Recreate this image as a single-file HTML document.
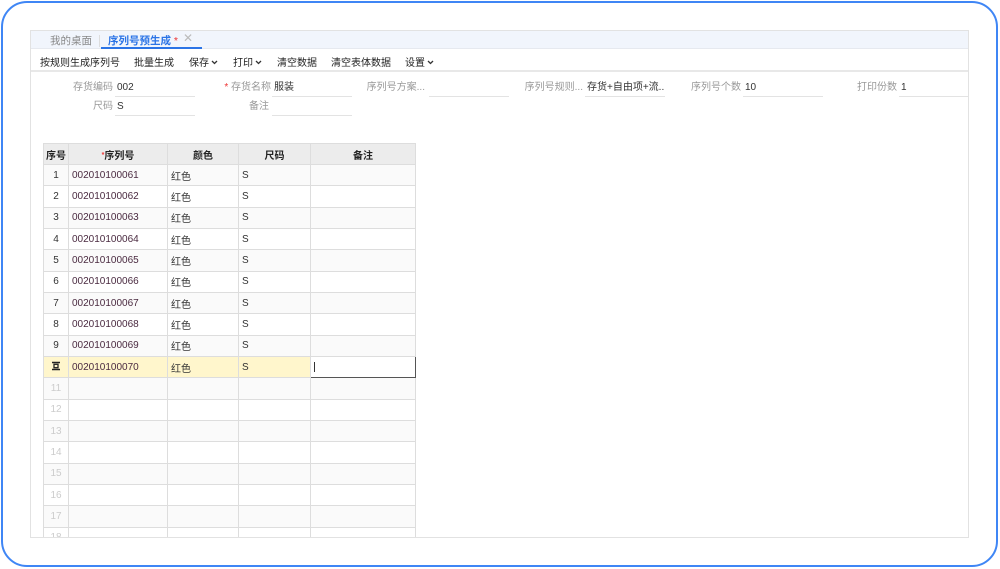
<!DOCTYPE html>
<html><head><meta charset="utf-8"><style>
*{margin:0;padding:0;box-sizing:border-box}
body{width:1000px;height:569px;background:#fff;position:relative;overflow:hidden;font-family:"Liberation Sans","Noto Sans CJK SC",sans-serif;font-size:11px;color:#333}
.outer{position:absolute;left:1px;top:1px;width:997px;height:566px;border:2px solid #3f86f5;border-radius:26px}
.panel{position:absolute;left:30px;top:30px;width:939px;height:508px;border:1px solid #e2e2e2;background:#fff;overflow:hidden}
.tabs{position:absolute;left:0;top:0;width:100%;height:18px;background:#f1f5fc;border-bottom:1px solid #e6e9ef}
.t{position:absolute;top:2px;font-size:10.5px}
.tool{position:absolute;left:0;top:19px;width:100%;height:22px;border-bottom:2px solid #e8e8e8}
.b{position:absolute;top:4px;font-size:10px;color:#222}
.a{position:absolute;font-size:10px;color:#999;text-align:right;line-height:14px;white-space:nowrap}
.v{position:absolute;font-size:10px;color:#333;border-bottom:1px solid #e3e3e3;height:16px;line-height:14px;padding-left:2px;white-space:nowrap;overflow:hidden}
.c{display:inline-block;width:7px;height:5px;margin-left:2px;vertical-align:1px}
table{position:absolute;left:12px;top:112px;border-collapse:collapse;font-size:10px}
td,th{border:1px solid #ddd;height:21.33px;padding:0 3px;text-align:left;font-weight:normal;white-space:nowrap}
th{background:#ececec;font-weight:bold;text-align:center;color:#222;height:21px}
td.n{text-align:center;color:#333;background:#fff}
tr.e td.n{color:#ccc}
tr:nth-child(even) td{background:#fafafa}
tr.sel td{background:#fff6cc}
td.sn{color:#4a2a40}
</style></head><body>
<div class="outer"></div>
<div class="panel">
 <div class="tabs">
  <span class="t" style="left:19px;color:#888">我的桌面</span>
  <div style="position:absolute;left:68px;top:4px;width:1px;height:12px;background:#ddd"></div>
  <span class="t" style="left:77px;color:#2b74e6;font-weight:bold">序列号预生成 <span style="color:#e33;font-weight:normal">*</span></span>
  <span class="t" style="left:152px;color:#bbb;font-size:12px;top:0">✕</span>
  <div style="position:absolute;left:70px;top:16px;width:101px;height:2px;background:#2b74e6"></div>
 </div>
 <div class="tool">
  <span class="b" style="left:9px">按规则生成序列号</span>
  <span class="b" style="left:103px">批量生成</span>
  <span class="b" style="left:158px">保存<svg class="c" viewBox="0 0 7 5"><path d="M1 1l2.5 2.5L6 1" stroke="#333" stroke-width="1.3" fill="none"/></svg></span>
  <span class="b" style="left:202px">打印<svg class="c" viewBox="0 0 7 5"><path d="M1 1l2.5 2.5L6 1" stroke="#333" stroke-width="1.3" fill="none"/></svg></span>
  <span class="b" style="left:246px">清空数据</span>
  <span class="b" style="left:300px">清空表体数据</span>
  <span class="b" style="left:374px">设置<svg class="c" viewBox="0 0 7 5"><path d="M1 1l2.5 2.5L6 1" stroke="#333" stroke-width="1.3" fill="none"/></svg></span>
 </div>
 <span class="a" style="left:30px;width:52px;top:50px">存货编码</span><div class="v" style="left:84px;top:50px;width:80px">002</div>
 <span class="a" style="left:180px;width:60px;top:50px"><span style="color:#e33">*</span> 存货名称</span><div class="v" style="left:241px;top:50px;width:80px">服装</div>
 <span class="a" style="left:330px;width:64px;top:50px">序列号方案...</span><div class="v" style="left:398px;top:50px;width:80px"></div>
 <span class="a" style="left:490px;width:62px;top:50px">序列号规则...</span><div class="v" style="left:554px;top:50px;width:80px">存货+自由项+流...</div>
 <span class="a" style="left:650px;width:60px;top:50px">序列号个数</span><div class="v" style="left:712px;top:50px;width:80px">10</div>
 <span class="a" style="left:820px;width:46px;top:50px">打印份数</span><div class="v" style="left:868px;top:50px;width:80px">1</div>
 <span class="a" style="left:30px;width:52px;top:69px">尺码</span><div class="v" style="left:84px;top:69px;width:80px">S</div>
 <span class="a" style="left:180px;width:58px;top:69px">备注</span><div class="v" style="left:241px;top:69px;width:80px"></div>
 <table>
  <tr><th style="width:25px;padding:0">序号</th><th style="width:99px"><span style="color:#e33;font-size:7px;vertical-align:2px">*</span>序列号</th><th style="width:71px">颜色</th><th style="width:72px">尺码</th><th style="width:105px">备注</th></tr>
  <tr><td class="n">1</td><td class="sn">002010100061</td><td>红色</td><td>S</td><td></td></tr>
  <tr><td class="n">2</td><td class="sn">002010100062</td><td>红色</td><td>S</td><td></td></tr>
  <tr><td class="n">3</td><td class="sn">002010100063</td><td>红色</td><td>S</td><td></td></tr>
  <tr><td class="n">4</td><td class="sn">002010100064</td><td>红色</td><td>S</td><td></td></tr>
  <tr><td class="n">5</td><td class="sn">002010100065</td><td>红色</td><td>S</td><td></td></tr>
  <tr><td class="n">6</td><td class="sn">002010100066</td><td>红色</td><td>S</td><td></td></tr>
  <tr><td class="n">7</td><td class="sn">002010100067</td><td>红色</td><td>S</td><td></td></tr>
  <tr><td class="n">8</td><td class="sn">002010100068</td><td>红色</td><td>S</td><td></td></tr>
  <tr><td class="n">9</td><td class="sn">002010100069</td><td>红色</td><td>S</td><td></td></tr>
  <tr class="sel"><td class="n" style="background:#fff6cc"><svg width="10" height="10" viewBox="0 0 10 10"><path d="M1 1.5h8M1 8.5h8" stroke="#222" stroke-width="1.4"/><rect x="3" y="3.3" width="4" height="3.4" fill="none" stroke="#222" stroke-width="1.3"/></svg></td><td class="sn">002010100070</td><td>红色</td><td>S</td><td style="background:#fff;border:1.5px solid #555"><span style="display:inline-block;width:1px;height:10px;background:#333;vertical-align:middle"></span></td></tr>
  <tr class="e"><td class="n">11</td><td></td><td></td><td></td><td></td></tr>
  <tr class="e"><td class="n">12</td><td></td><td></td><td></td><td></td></tr>
  <tr class="e"><td class="n">13</td><td></td><td></td><td></td><td></td></tr>
  <tr class="e"><td class="n">14</td><td></td><td></td><td></td><td></td></tr>
  <tr class="e"><td class="n">15</td><td></td><td></td><td></td><td></td></tr>
  <tr class="e"><td class="n">16</td><td></td><td></td><td></td><td></td></tr>
  <tr class="e"><td class="n">17</td><td></td><td></td><td></td><td></td></tr>
  <tr class="e"><td class="n">18</td><td></td><td></td><td></td><td></td></tr>
 </table>
</div>
</body></html>
